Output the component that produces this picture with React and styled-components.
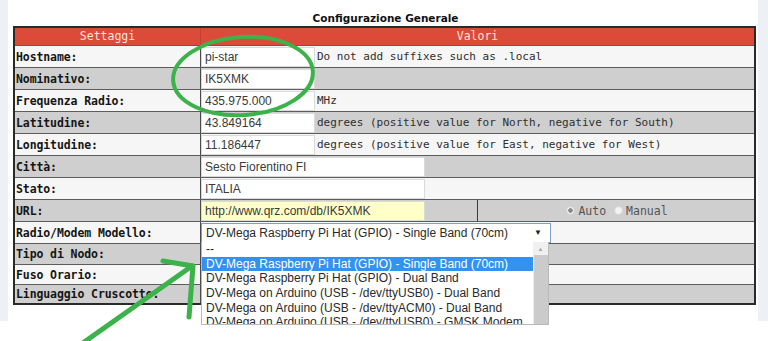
import React from "react";
import styled, { createGlobalStyle } from "styled-components";

const GlobalStyle = createGlobalStyle`
  html, body { margin: 0; padding: 0; background: #fff; }
  body { width: 768px; height: 341px; overflow: hidden; position: relative; }
  * { box-sizing: border-box; }
`;

const MONO = `"DejaVu Sans Mono", "Liberation Mono", monospace`;
const SANS = `"Liberation Sans", Arial, sans-serif`;

const Frame = styled.div`
  height: 321px;
  background: #edf0f5;
  display: flex;
  padding: 0 10px 0 8px;
`;

const Panel = styled.main`
  flex: 1;
  background: #fff;
  padding: 10px 2px 0 5px;
  display: flex;
  flex-direction: column;
`;

const Title = styled.h1`
  margin: 0;
  height: 16px;
  font: bold 10.5px/16px "DejaVu Sans", Verdana, sans-serif;
  color: #111;
  text-align: center;
  padding-left: 2px;
`;

const Table = styled.div`
  border: 2px solid #2a2a2a;
  display: flex;
  flex-direction: column;
`;

const HeaderRow = styled.div`
  display: flex;
  height: 17px;
  background: #dc4b39;
  color: #fde2d8;
  font: 11.5px/16px ${MONO};
`;

const HeaderCell = styled.div`
  width: ${(p) => (p.$first ? "186px" : "auto")};
  flex: ${(p) => (p.$first ? "none" : "1")};
  text-align: center;
  border-right: ${(p) => (p.$first ? "1px solid #c44030" : "none")};
`;

const Row = styled.div`
  display: flex;
  height: ${(p) => p.$h}px;
  border-top: 1px solid #5c5c5c;
  background: ${(p) => (p.$alt ? "#cfcfcf" : "#f6f6f6")};
`;

const Label = styled.div`
  width: 186px;
  flex: none;
  border-right: 1px solid #4a4a4a;
  padding-left: 1px;
  display: flex;
  align-items: center;
  font: bold 11.5px ${MONO};
  color: #151515;
  letter-spacing: -0.1px;
`;

const Value = styled.div`
  flex: 1;
  display: flex;
  align-items: center;
  position: relative;
`;

const Field = styled.div`
  width: ${(p) => (p.$wide ? "224px" : "114px")};
  height: 20px;
  background: ${(p) => (p.$yellow ? "#ffffc8" : "#fff")};
  border: 1px solid #dadada;
  padding: 0 3px;
  display: flex;
  align-items: center;
  font: 12px ${SANS};
  color: #3a3a3a;
  flex: none;
`;

const Hint = styled.span`
  padding-left: 2px;
  font: 11px ${MONO};
  color: #2e2e2e;
  white-space: nowrap;
`;

const SplitCell = styled.div`
  width: 277px;
  height: 100%;
  display: flex;
  align-items: center;
  border-right: 1px solid #3a3a3a;
  flex: none;
`;

const RadioCell = styled.div`
  flex: 1;
  display: flex;
  align-items: center;
  justify-content: center;
  gap: 4px;
  font: 11.5px ${MONO};
  color: #555;
  padding-left: 6px;
`;

const RadioDot = styled.span`
  width: 9px;
  height: 9px;
  border-radius: 50%;
  border: 1px solid #d4d4d4;
  background: ${(p) => (p.$on ? "radial-gradient(circle, #8a8a8a 0 2px, #efefef 2.5px)" : "#f3f3f3")};
  display: inline-block;
  margin-right: 3px;
`;

const RadioOpt = styled.label`
  display: flex;
  align-items: center;
  margin-right: 4px;
`;

const Select = styled.div`
  width: 350px;
  height: 20px;
  background: #fff;
  border: 1px solid #7f9fcf;
  display: flex;
  align-items: center;
  justify-content: space-between;
  padding: 0 8px 0 4px;
  font: 12px ${SANS};
  color: #2a2a2a;
  flex: none;
`;

const Arrow = styled.span`
  font-size: 8px;
  color: #222;
`;

const ListBox = styled.div`
  position: absolute;
  left: 0;
  top: 20px;
  width: 348px;
  height: 83px;
  background: #fff;
  border: 1px solid #b9b9b9;
  border-top: none;
  display: flex;
  z-index: 5;
  overflow: hidden;
`;

const Options = styled.ul`
  flex: 1;
  margin: 0;
  padding: 0;
  list-style: none;
`;

const Option = styled.li`
  height: 14.7px;
  padding-left: 4px;
  font: 12px/14.7px ${SANS};
  white-space: nowrap;
  overflow: hidden;
  color: ${(p) => (p.$sel ? "#fff" : "#2a2a2a")};
  background: ${(p) => (p.$sel ? "#3391f0" : "transparent")};
`;

const ScrollBar = styled.div`
  width: 15px;
  flex: none;
  display: flex;
  flex-direction: column;
  background: #f0f0f0;
`;

const ScrollUp = styled.div`
  height: 13px;
  display: flex;
  align-items: center;
  justify-content: center;
  font-size: 6px;
  color: #a8a8a8;
`;

const ScrollThumb = styled.div`
  flex: 1;
  background: #cbcbcb;
  margin: 0 0 0 1px;
`;

const Overlay = styled.svg`
  position: absolute;
  left: 0;
  top: 0;
  width: 768px;
  height: 341px;
  pointer-events: none;
  z-index: 10;
`;

const rows = [
  { label: "Hostname:", value: "pi-star", hint: "Do not add suffixes such as .local" },
  { label: "Nominativo:", value: "IK5XMK" },
  { label: "Frequenza Radio:", value: "435.975.000", hint: "MHz" },
  { label: "Latitudine:", value: "43.849164", hint: "degrees (positive value for North, negative for South)" },
  { label: "Longitudine:", value: "11.186447", hint: "degrees (positive value for East, negative for West)" },
  { label: "Città:", value: "Sesto Fiorentino FI", wide: true },
  { label: "Stato:", value: "ITALIA", wide: true },
];

const options = [
  "--",
  "DV-Mega Raspberry Pi Hat (GPIO) - Single Band (70cm)",
  "DV-Mega Raspberry Pi Hat (GPIO) - Dual Band",
  "DV-Mega on Arduino (USB - /dev/ttyUSB0) - Dual Band",
  "DV-Mega on Arduino (USB - /dev/ttyACM0) - Dual Band",
  "DV-Mega on Arduino (USB - /dev/ttyUSB0) - GMSK Modem",
];

export default function App() {
  return (
    <>
      <GlobalStyle />
      <Frame>
        <Panel>
          <Title>Configurazione Generale</Title>
          <Table>
            <HeaderRow>
              <HeaderCell $first>Settaggi</HeaderCell>
              <HeaderCell>Valori</HeaderCell>
            </HeaderRow>
            {rows.map((r, i) => (
              <Row key={r.label} $h={22} $alt={i % 2 === 1}>
                <Label>{r.label}</Label>
                <Value>
                  <Field $wide={r.wide}>{r.value}</Field>
                  {r.hint && <Hint>{r.hint}</Hint>}
                </Value>
              </Row>
            ))}
            <Row $h={22} $alt>
              <Label>URL:</Label>
              <Value>
                <SplitCell>
                  <Field $wide $yellow>http://www.qrz.com/db/IK5XMK</Field>
                </SplitCell>
                <RadioCell>
                  <RadioOpt><RadioDot $on />Auto</RadioOpt>
                  <RadioOpt><RadioDot />Manual</RadioOpt>
                </RadioCell>
              </Value>
            </Row>
            <Row $h={22}>
              <Label>Radio/Modem Modello:</Label>
              <Value>
                <Select>
                  <span>DV-Mega Raspberry Pi Hat (GPIO) - Single Band (70cm)</span>
                  <Arrow>▼</Arrow>
                </Select>
                <ListBox>
                  <Options>
                    {options.map((o, i) => (
                      <Option key={o} $sel={i === 1}>{o}</Option>
                    ))}
                  </Options>
                  <ScrollBar>
                    <ScrollUp>▲</ScrollUp>
                    <ScrollThumb />
                  </ScrollBar>
                </ListBox>
              </Value>
            </Row>
            <Row $h={21} $alt>
              <Label>Tipo di Nodo:</Label>
              <Value />
            </Row>
            <Row $h={20}>
              <Label>Fuso Orario:</Label>
              <Value />
            </Row>
            <Row $h={19} $alt>
              <Label>Linguaggio Cruscotto:</Label>
              <Value />
            </Row>
          </Table>
        </Panel>
      </Frame>
      <Overlay viewBox="0 0 768 341">
        <ellipse cx="243" cy="76" rx="70" ry="39" transform="rotate(-4 243 76)" fill="none" stroke="#3cb24a" strokeWidth="4" />
        <g stroke="#3cb24a" strokeWidth="5" strokeLinecap="round" fill="none">
          <line x1="80" y1="345" x2="192" y2="266" />
          <polyline points="163,261 193,266 189,317" strokeLinejoin="round" />
        </g>
      </Overlay>
    </>
  );
}
